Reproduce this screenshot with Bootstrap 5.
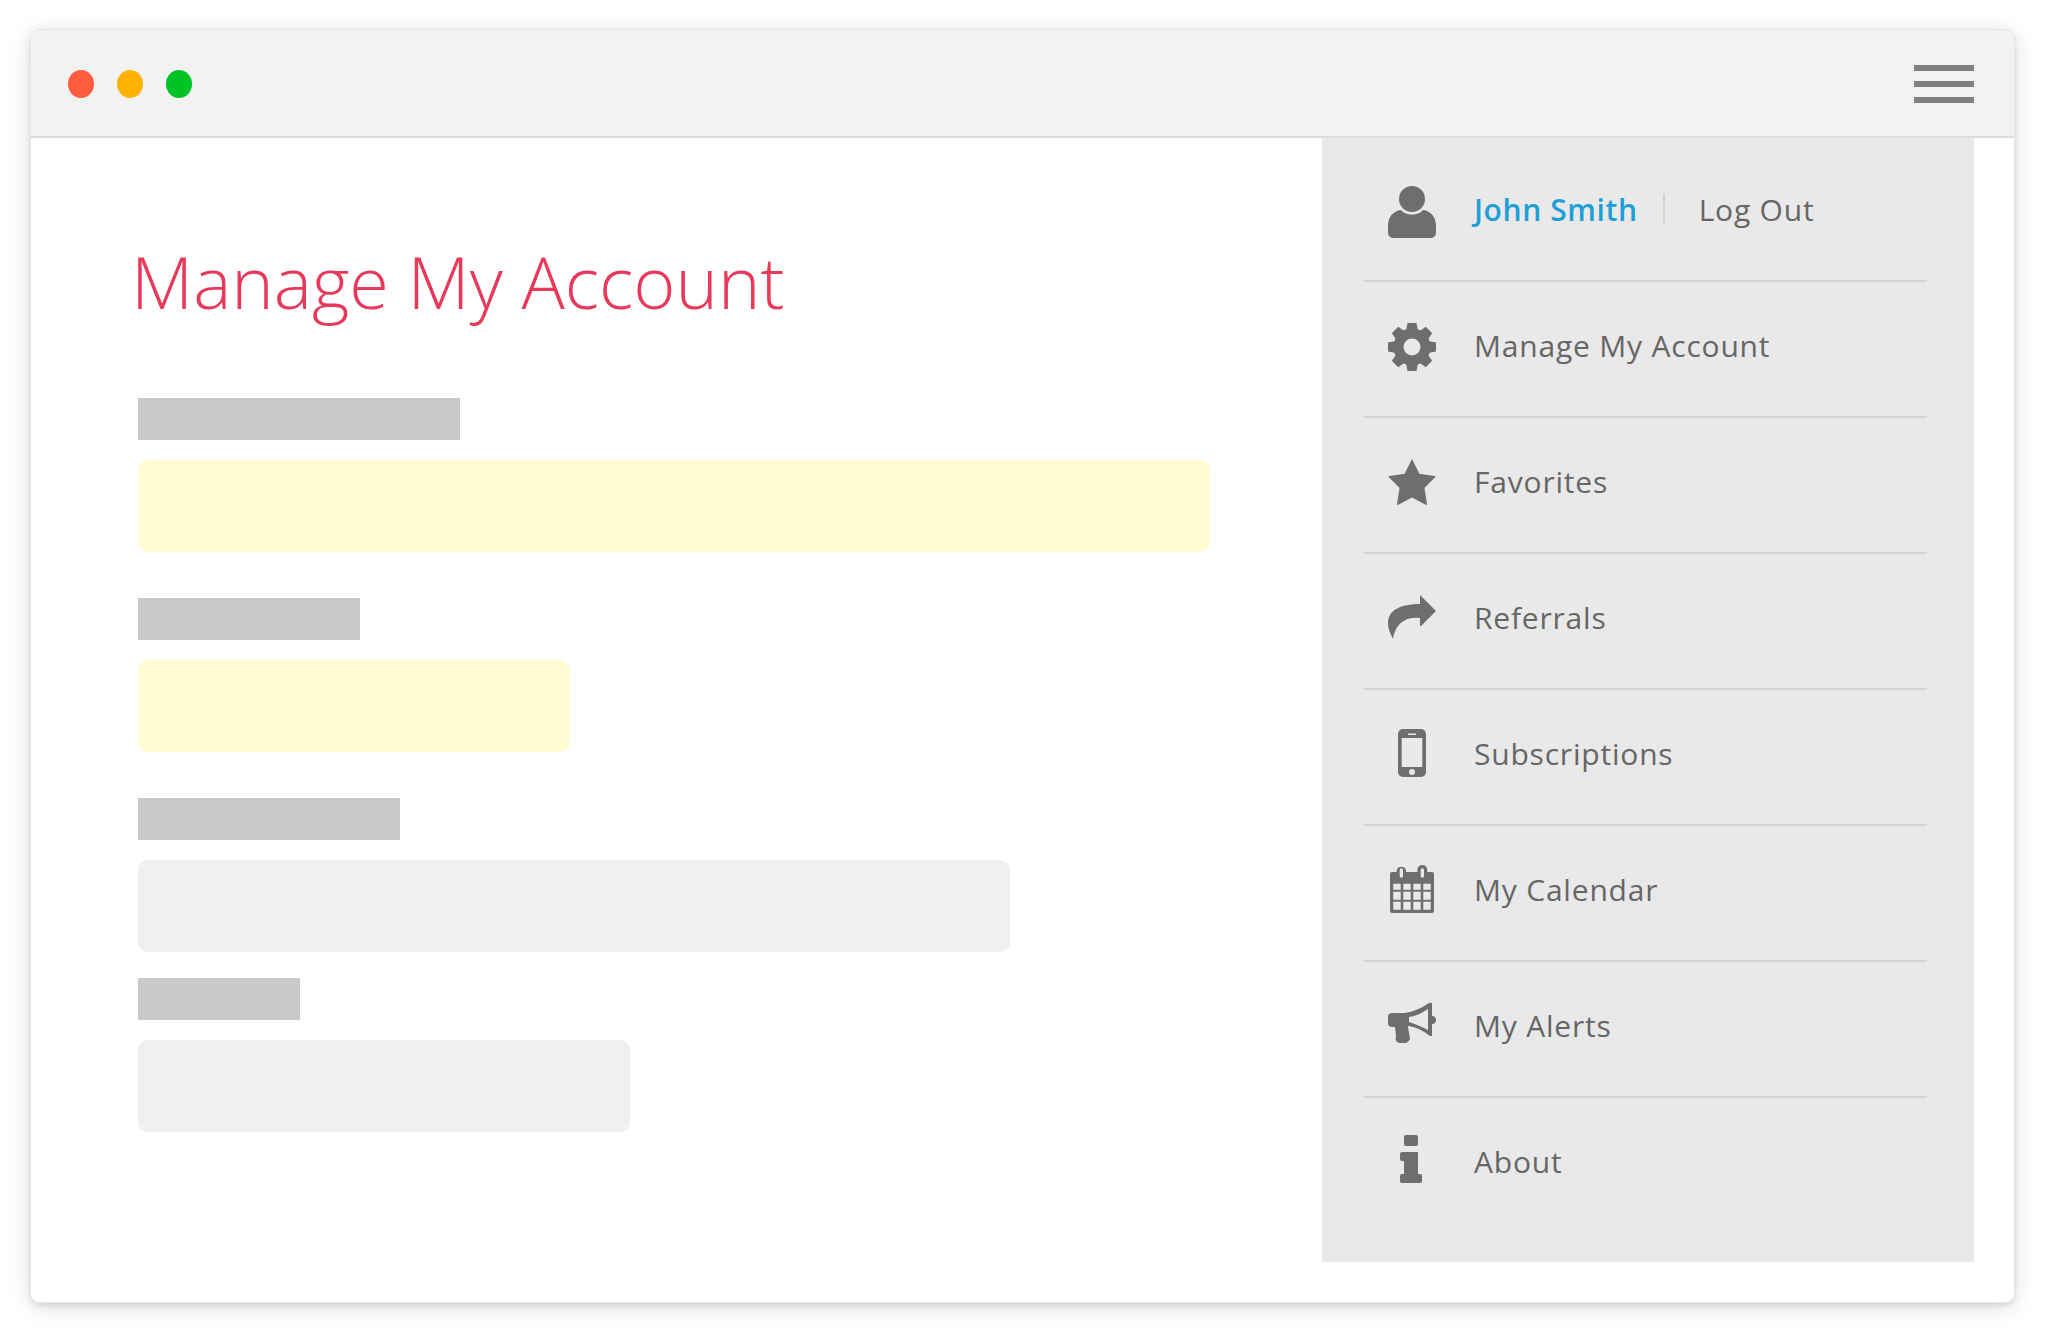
<!DOCTYPE html>
<html lang="en">
<head>
<meta charset="utf-8">
<title>Manage My Account</title>
<link rel="stylesheet" href="https://cdn.jsdelivr.net/npm/bootstrap@5.3.0/dist/css/bootstrap.min.css">
<style>
html,body{background:#fff;height:100%;overflow:hidden}
body{font-family:"Open Sans",sans-serif;padding:30px 0 0 31px}
.win{width:1983px;height:1272px;border-radius:8px;background:#fff;box-shadow:0 0 0 1px #e6e6e6,0 3px 6px rgba(0,0,0,.12),0 4px 24px rgba(0,0,0,.14);overflow:hidden}
.win-top{height:108px;background:#f2f2f2;border-bottom:2px solid #dcdcdc;padding:2px 40px 0 37px}
.dot{width:26px;height:28px;border-radius:50%}
.dot-r{background:#ff5c40}.dot-a{background:#ffb300;margin-left:23px}.dot-g{background:#00c425;margin-left:22.5px}
.burger{width:60px;height:38px;background:repeating-linear-gradient(#808080 0 6px,transparent 6px 16px)}
.pane-l{padding:0 0 0 107px}
.page-title{font-weight:300;font-size:72px;line-height:100px;color:#e8395a;margin:93px 0 67px -7px}
.lbl{height:42px;background:#cac8c9;margin-bottom:20px}
.fld{height:92px;border-radius:10px}
.fld-y{background:#fffbd2;margin-bottom:46px}
.fld-g{background:#f0f0f0;margin-bottom:26px}
.side{width:652px;height:1124px;margin-right:40px;background:#e9e9e9;padding:0 47px 0 42px;flex:none}
.side-row{height:136px;border-bottom:2px solid #d4d4d4;padding:0 0 8px 24px;font-size:30px;color:#666;letter-spacing:.8px}
.side-row:first-child{height:144px;padding:1px 0 0 24px}
.side-row:last-child{border-bottom:0;padding-bottom:10px}
.ic{margin-right:38px;flex:none;fill:#6e6e6e}
.ic-d5{margin-top:5px}.ic-d4{margin-top:4px}.ic-d2{margin-top:2px}.ic-u4{margin-bottom:4px}
.who{color:#1f9fd8;font-weight:600;letter-spacing:.6px}
.sep{width:2px;height:31px;background:#d2d2d2;margin:0 34px 0 25px}
</style>
</head>
<body>
<div class="win d-flex flex-column">
  <div class="win-top d-flex align-items-center">
    <span class="dot dot-r"></span><span class="dot dot-a"></span><span class="dot dot-g"></span>
    <span class="burger ms-auto"></span>
  </div>
  <div class="d-flex flex-grow-1">
    <div class="pane-l flex-grow-1">
      <h1 class="page-title">Manage My Account</h1>
      <div class="lbl" style="width:322px"></div>
      <div class="fld fld-y" style="width:1072px"></div>
      <div class="lbl" style="width:222px"></div>
      <div class="fld fld-y" style="width:432px"></div>
      <div class="lbl" style="width:262px"></div>
      <div class="fld fld-g" style="width:872px"></div>
      <div class="lbl" style="width:162px"></div>
      <div class="fld fld-g" style="width:492px"></div>
    </div>
    <div class="side">
      <div class="side-row d-flex align-items-center">
        <svg class="ic ic-d5" width="48" height="52" viewBox="0 0 48 52"><circle cx="24" cy="13" r="13"/><path d="M13 24c2 3 7 4.500 11 4.500S33 27 35 24c8 1 13 7 13 16v6c0 4-2 6-6 6H6c-4 0-6-2-6-6v-6c0-9 5-15 13-16z"/></svg>
        <span class="who">John Smith</span><span class="sep"></span><span>Log Out</span>
      </div>
      <div class="side-row d-flex align-items-center">
        <svg class="ic ic-d4" width="48" height="48" viewBox="0 0 48 48"><circle cx="24" cy="24" r="13.500" fill="none" stroke="#6e6e6e" stroke-width="10"/><g><path d="M19.500 0h9L30 8H18z"/><path transform="rotate(45 24 24)" d="M19.500 0h9L30 8H18z"/><path transform="rotate(90 24 24)" d="M19.500 0h9L30 8H18z"/><path transform="rotate(135 24 24)" d="M19.500 0h9L30 8H18z"/><path transform="rotate(180 24 24)" d="M19.500 0h9L30 8H18z"/><path transform="rotate(225 24 24)" d="M19.500 0h9L30 8H18z"/><path transform="rotate(270 24 24)" d="M19.500 0h9L30 8H18z"/><path transform="rotate(315 24 24)" d="M19.500 0h9L30 8H18z"/></g></svg>
        <span>Manage My Account</span>
      </div>
      <div class="side-row d-flex align-items-center">
        <svg class="ic ic-d2" width="48" height="46" viewBox="0 0 48 46"><path d="M24 0l7.400 14.800L48 17.200 36.500 29 39 45.200l-1 .8-14-7.500L10 46l-1-.8L11.500 29 0 17.200l16.600-2.400z"/></svg>
        <span>Favorites</span>
      </div>
      <div class="side-row d-flex align-items-center">
        <svg class="ic" width="48" height="44" viewBox="0 0 48 44"><path d="M32 0l16 16-15 15h-1v-8C20 22 8 26 5 44 2 38 0 34 0 28 0 15 13 9 32 9z"/></svg>
        <span>Referrals</span>
      </div>
      <div class="side-row d-flex align-items-center">
        <svg class="ic" width="48" height="48" viewBox="0 0 48 48"><path fill-rule="evenodd" d="M15 0h18a5 5 0 0 1 5 5v38a5 5 0 0 1-5 5H15a5 5 0 0 1-5-5V5a5 5 0 0 1 5-5zm-1.300 9v29h20.600V9zM24 40a3 3 0 1 0 0 6 3 3 0 0 0 0-6zM20 4.500V6h8V4.500z"/></svg>
        <span>Subscriptions</span>
      </div>
      <div class="side-row d-flex align-items-center">
        <svg class="ic" width="48" height="48" viewBox="-2 0 48 48"><path fill-rule="evenodd" d="M6.700 5a5 5 0 0 1 9.300 0v2h11.300V5a5 5 0 0 1 10 0v2H42a2 2 0 0 1 2 2v37a2 2 0 0 1-2 2H2a2 2 0 0 1-2-2V9a2 2 0 0 1 2-2h4.700zM9.700 5v6a1.650 1.650 0 0 0 3.300 0V5a1.650 1.650 0 0 0-3.300 0zm21 0v6a1.650 1.650 0 0 0 3.300 0V5a1.650 1.650 0 0 0-3.300 0zM3.300 18.700v6h7.400v-6zm10 0v6h7.400v-6zm10 0v6h7.400v-6zm10 0v6h7.400v-6zM3.300 26.700v8h7.400v-8zm10 0v8h7.400v-8zm10 0v8h7.400v-8zm10 0v8h7.400v-8zM3.300 36.700v8h7.400v-8zm10 0v8h7.400v-8zm10 0v8h7.400v-8zm10 0v8h7.400v-8z"/></svg>
        <span>My Calendar</span>
      </div>
      <div class="side-row d-flex align-items-center">
        <svg class="ic ic-u4" width="48" height="40" viewBox="0 0 48 40"><path fill-rule="evenodd" d="M4 10h12C25 9 34 5 41 0h3v13c3 0 4 2 4 4s-1 4-4 4v12h-2c-6-5-14-9-22-10v1l2 12c-1 2-3 4-5 4h-6c-3-1-4-4-3-7l-1-9H4c-3 0-4-2-4-4v-6c0-3 2-4 4-4zm17 4v5c7 2 13 5 19 8V6c-6 4-12 7-19 8z"/></svg>
        <span>My Alerts</span>
      </div>
      <div class="side-row d-flex align-items-center">
        <svg class="ic ic-u4" width="48" height="48" viewBox="0 0 48 48"><path d="M18 0h10a2 2 0 0 1 2 2v7a2 2 0 0 1-2 2H18a2 2 0 0 1-2-2V2a2 2 0 0 1 2-2zM14 17h16v22h2a2 2 0 0 1 2 2v5a2 2 0 0 1-2 2H14a2 2 0 0 1-2-2v-5a2 2 0 0 1 2-2h2V26h-2a2 2 0 0 1-2-2v-5a2 2 0 0 1 2-2z"/></svg>
        <span>About</span>
      </div>
    </div>
  </div>
</div>
</body>
</html>
